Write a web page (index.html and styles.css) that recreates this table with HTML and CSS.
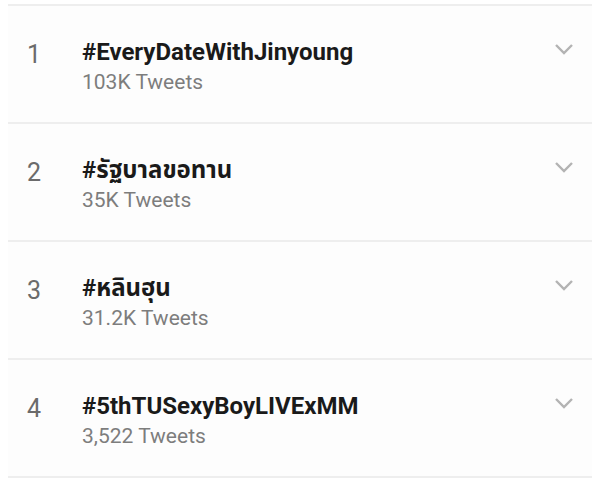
FILE: index.html
```html
<!DOCTYPE html>
<html lang="th">
<head>
<meta charset="utf-8">
<link rel="stylesheet" href="styles.css">
</head>
<body>
<ul class="trends">
  <li class="trend">
    <span class="rank">1</span>
    <div class="info">
      <div class="tag">#EveryDateWithJinyoung</div>
      <div class="count">103K Tweets</div>
    </div>
    <svg class="chev" viewBox="0 0 20 12" width="20" height="12"><path d="M2 2 L10 10 L18 2" fill="none" stroke="#b3b3b3" stroke-width="2.4"/></svg>
  </li>
  <li class="trend">
    <span class="rank">2</span>
    <div class="info">
      <div class="tag">#รัฐบาลขอทาน</div>
      <div class="count">35K Tweets</div>
    </div>
    <svg class="chev" viewBox="0 0 20 12" width="20" height="12"><path d="M2 2 L10 10 L18 2" fill="none" stroke="#b3b3b3" stroke-width="2.4"/></svg>
  </li>
  <li class="trend">
    <span class="rank">3</span>
    <div class="info">
      <div class="tag">#หลินฮุน</div>
      <div class="count">31.2K Tweets</div>
    </div>
    <svg class="chev" viewBox="0 0 20 12" width="20" height="12"><path d="M2 2 L10 10 L18 2" fill="none" stroke="#b3b3b3" stroke-width="2.4"/></svg>
  </li>
  <li class="trend">
    <span class="rank">4</span>
    <div class="info">
      <div class="tag">#5thTUSexyBoyLIVExMM</div>
      <div class="count">3,522 Tweets</div>
    </div>
    <svg class="chev" viewBox="0 0 20 12" width="20" height="12"><path d="M2 2 L10 10 L18 2" fill="none" stroke="#b3b3b3" stroke-width="2.4"/></svg>
  </li>
</ul>
</body>
</html>
```
FILE: styles.css
```css
html, body {
  margin: 0;
  padding: 0;
  background: #ffffff;
}
body {
  font-family: Roboto, "Noto Sans", "Noto Sans Thai", sans-serif;
  width: 600px;
  height: 496px;
  overflow: hidden;
}
.trends {
  list-style: none;
  margin: 0;
  padding: 4px 8px 0 8px;
}
.trend {
  display: flex;
  align-items: flex-start;
  height: 116px;
  border-top: 2px solid #eeeeee;
  background: #fdfdfd;
}
.trend:last-child {
  border-bottom: 2px solid #eeeeee;
}
.rank {
  width: 74px;
  padding-left: 19px;
  box-sizing: border-box;
  margin-top: 34px;
  font-size: 25px;
  color: #6b6b6b;
  line-height: 30px;
}
.info {
  flex: 1;
  margin-top: 32px;
}
.tag {
  font-weight: 700;
  font-size: 24px;
  line-height: 28px;
  color: #1a1a1a;
}
.count {
  margin-top: 3px;
  font-size: 21px;
  line-height: 27px;
  color: #7d7d7d;
}
.chev {
  margin-top: 37px;
  margin-right: 18px;
}
```
